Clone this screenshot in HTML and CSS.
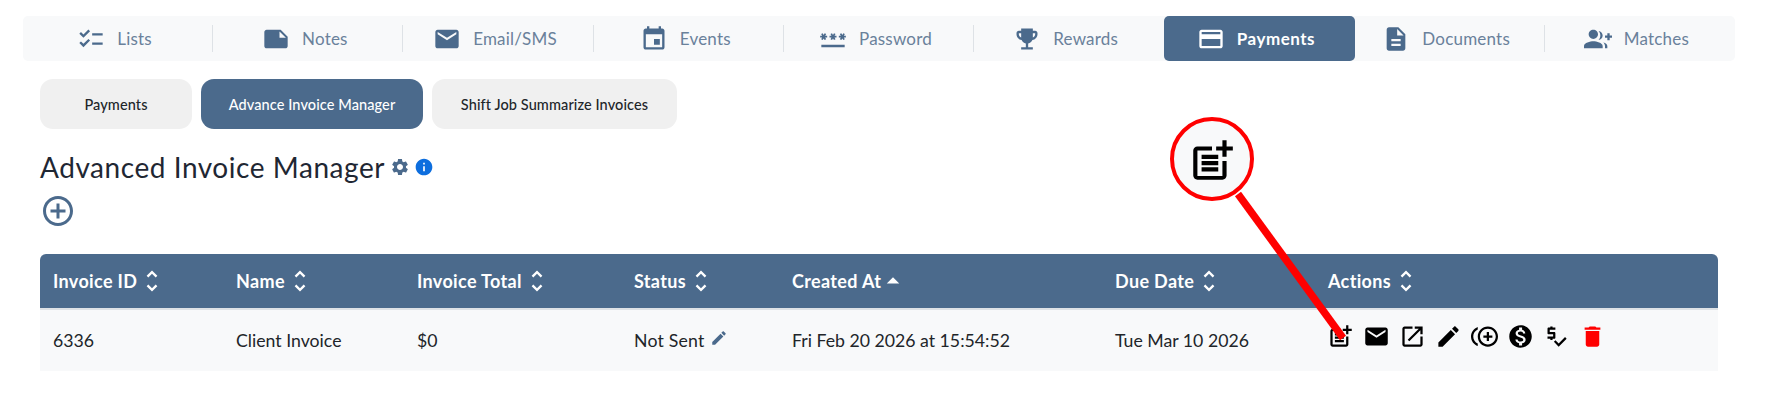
FILE: index.html
```html
<!DOCTYPE html>
<html lang="en">
<head>
  <meta charset="UTF-8" />
  <title>Advanced Invoice Manager</title>
  <link rel="stylesheet" href="styles.css">
</head>
<body>

  <!-- Top section nav -->
  <nav class="top-nav">
    <a class="nav-item"><svg viewBox="0 0 24 24"><path d="M22 7h-9v2h9V7zm0 8h-9v2h9v-2zM5.54 11 2 7.46l1.41-1.41 2.12 2.12 4.24-4.24 1.41 1.41L5.54 11zm0 8L2 15.46l1.41-1.41 2.12 2.12 4.24-4.24 1.41 1.41L5.54 19z"/></svg>Lists</a>
    <a class="nav-item"><svg viewBox="0 0 24 24"><path d="M22 10l-6-6H4c-1.1 0-2 .9-2 2v12.01c0 1.1.9 1.99 2 1.99l16-.01c1.1 0 2-.89 2-1.99v-8zm-7-4.5l5.5 5.5H15V5.5z"/></svg>Notes</a>
    <a class="nav-item"><svg viewBox="0 0 24 24"><path d="M20 4H4c-1.1 0-1.99.9-1.99 2L2 18c0 1.1.9 2 2 2h16c1.1 0 2-.9 2-2V6c0-1.1-.9-2-2-2zm0 4l-8 5-8-5V6l8 5 8-5v2z"/></svg>Email/SMS</a>
    <a class="nav-item"><svg viewBox="0 0 24 24"><path d="M17 12h-5v5h5v-5zM16 1v2H8V1H6v2H5c-1.11 0-1.99.9-1.99 2L3 19c0 1.1.89 2 2 2h14c1.1 0 2-.9 2-2V5c0-1.1-.9-2-2-2h-1V1h-2zm3 18H5V8h14v11z"/></svg>Events</a>
    <a class="nav-item"><svg viewBox="0 0 24 24"><path d="M2 17h20v2H2v-2zm1.15-4.05L4 11.47l.85 1.48 1.3-.75-.85-1.48H7v-1.5H5.3l.85-1.47L4.85 7 4 8.47 3.15 7l-1.3.75.85 1.47H1v1.5h1.7l-.85 1.48 1.3.75zm6.7-.75 1.3.75.85-1.48.85 1.48 1.3-.75-.85-1.48H15v-1.5h-1.7l.85-1.47-1.3-.75L12 8.47 11.15 7l-1.3.75.85 1.47H9v1.5h1.7l-.85 1.48zM23 9.22h-1.7l.85-1.47-1.3-.75L20 8.47 19.15 7l-1.3.75.85 1.47H17v1.5h1.7l-.85 1.48 1.3.75.85-1.48.85 1.48 1.3-.75-.85-1.48H23v-1.5z"/></svg>Password</a>
    <a class="nav-item"><svg viewBox="0 0 24 24"><path d="M19 5h-2V3H7v2H5c-1.1 0-2 .9-2 2v1c0 2.55 1.92 4.63 4.39 4.94.63 1.5 1.98 2.63 3.61 2.96V19H7v2h10v-2h-4v-3.1c1.63-.33 2.98-1.46 3.61-2.96C19.08 12.63 21 10.55 21 8V7c0-1.1-.9-2-2-2zM5 8V7h2v3.82C5.84 10.4 5 9.3 5 8zm14 0c0 1.3-.84 2.4-2 2.82V7h2v1z"/></svg>Rewards</a>
    <a class="nav-item active"><svg viewBox="0 0 24 24"><path d="M20 4H4c-1.11 0-1.99.89-1.99 2L2 18c0 1.11.89 2 2 2h16c1.11 0 2-.89 2-2V6c0-1.11-.89-2-2-2zm0 14H4v-6h16v6zm0-10H4V6h16v2z"/></svg>Payments</a>
    <a class="nav-item"><svg viewBox="0 0 24 24"><path d="M14 2H6c-1.1 0-1.99.9-1.99 2L4 20c0 1.1.89 2 1.99 2H18c1.1 0 2-.9 2-2V8l-6-6zm2 16H8v-2h8v2zm0-4H8v-2h8v2zm-3-5V3.5L18.5 9H13z"/></svg>Documents</a>
    <a class="nav-item"><svg viewBox="0 0 24 24"><path d="M22 9V7h-2v2h-2v2h2v2h2v-2h2V9zM8 12c2.21 0 4-1.79 4-4s-1.79-4-4-4-4 1.79-4 4 1.79 4 4 4zm0 2c-2.67 0-8 1.34-8 4v2h16v-2c0-2.66-5.33-4-8-4zm4.51-8.95C13.43 6.11 14 7.51 14 9s-.57 2.89-1.49 3.95C14.47 12.7 16 11.06 16 9s-1.53-3.7-3.49-3.95zm4.02 9.78c.75.81 1.47 1.93 1.47 3.17v2h2v-2c0-1.45-1.59-2.52-3.47-3.17z"/></svg>Matches</a>
  </nav>

  <main class="content">
    <div class="sub-tabs">
      <a class="sub-tab tab-payments">Payments</a>
      <a class="sub-tab tab-manager active">Advance Invoice Manager</a>
      <a class="sub-tab tab-shift">Shift Job Summarize Invoices</a>
    </div>

    <div class="title-row">
      <h1>Advanced Invoice Manager</h1>
      <svg class="gear" viewBox="0 0 24 24"><path d="M19.14 12.94c.04-.3.06-.61.06-.94 0-.32-.02-.64-.07-.94l2.03-1.58c.18-.14.23-.41.12-.61l-1.92-3.32c-.12-.22-.37-.29-.59-.22l-2.39.96c-.5-.38-1.03-.7-1.62-.94l-.36-2.54c-.04-.24-.24-.41-.48-.41h-3.84c-.24 0-.43.17-.47.41l-.36 2.54c-.59.24-1.13.57-1.62.94l-2.39-.96c-.22-.08-.47 0-.59.22L2.74 8.87c-.12.21-.08.47.12.61l2.03 1.58c-.05.3-.09.63-.09.94s.02.64.07.94l-2.03 1.58c-.18.14-.23.41-.12.61l1.92 3.32c.12.22.37.29.59.22l2.39-.96c.5.38 1.03.7 1.62.94l.36 2.54c.05.24.24.41.48.41h3.84c.24 0 .44-.17.47-.41l.36-2.54c.59-.24 1.13-.56 1.62-.94l2.39.96c.22.08.47 0 .59-.22l1.92-3.32c.12-.22.07-.47-.12-.61l-2.01-1.58zM12 15.6c-1.98 0-3.6-1.62-3.6-3.6s1.62-3.6 3.6-3.6 3.6 1.62 3.6 3.6-1.62 3.6-3.6 3.6z"/></svg>
      <svg class="info" viewBox="0 0 24 24"><path d="M12 2C6.48 2 2 6.48 2 12s4.48 10 10 10 10-4.48 10-10S17.52 2 12 2zm1 15h-2v-6h2v6zm0-8h-2V7h2v2z"/></svg>
    </div>

    <svg class="add-btn" viewBox="0 0 24 24"><path d="M13 7h-2v4H7v2h4v4h2v-4h4v-2h-4V7zm-1-5C6.48 2 2 6.48 2 12s4.48 10 10 10 10-4.48 10-10S17.52 2 12 2zm0 18c-4.41 0-8-3.59-8-8s3.59-8 8-8 8 3.59 8 8-3.59 8-8 8z"/></svg>

    <table class="invoices">
      <colgroup>
        <col class="col-id"><col class="col-name"><col class="col-total"><col class="col-status"><col class="col-created"><col class="col-due"><col class="col-actions">
      </colgroup>
      <thead>
        <tr>
          <th><span class="th-inner">Invoice ID<svg class="sort" viewBox="0 0 24 24"><path d="M12 5.83L15.17 9l1.41-1.41L12 3 7.41 7.59 8.83 9 12 5.83zm0 12.34L8.83 15l-1.41 1.41L12 21l4.59-4.59L15.17 15 12 18.17z"/></svg></span></th>
          <th><span class="th-inner">Name<svg class="sort" viewBox="0 0 24 24"><path d="M12 5.83L15.17 9l1.41-1.41L12 3 7.41 7.59 8.83 9 12 5.83zm0 12.34L8.83 15l-1.41 1.41L12 21l4.59-4.59L15.17 15 12 18.17z"/></svg></span></th>
          <th><span class="th-inner">Invoice Total<svg class="sort" viewBox="0 0 24 24"><path d="M12 5.83L15.17 9l1.41-1.41L12 3 7.41 7.59 8.83 9 12 5.83zm0 12.34L8.83 15l-1.41 1.41L12 21l4.59-4.59L15.17 15 12 18.17z"/></svg></span></th>
          <th><span class="th-inner">Status<svg class="sort" viewBox="0 0 24 24"><path d="M12 5.83L15.17 9l1.41-1.41L12 3 7.41 7.59 8.83 9 12 5.83zm0 12.34L8.83 15l-1.41 1.41L12 21l4.59-4.59L15.17 15 12 18.17z"/></svg></span></th>
          <th><span class="th-inner">Created At<svg class="sort sorted" viewBox="0 0 24 24"><path d="M7 14l5-5 5 5z"/></svg></span></th>
          <th><span class="th-inner">Due Date<svg class="sort" viewBox="0 0 24 24"><path d="M12 5.83L15.17 9l1.41-1.41L12 3 7.41 7.59 8.83 9 12 5.83zm0 12.34L8.83 15l-1.41 1.41L12 21l4.59-4.59L15.17 15 12 18.17z"/></svg></span></th>
          <th><span class="th-inner">Actions<svg class="sort" viewBox="0 0 24 24"><path d="M12 5.83L15.17 9l1.41-1.41L12 3 7.41 7.59 8.83 9 12 5.83zm0 12.34L8.83 15l-1.41 1.41L12 21l4.59-4.59L15.17 15 12 18.17z"/></svg></span></th>
        </tr>
      </thead>
      <tbody>
        <tr>
          <td>6336</td>
          <td>Client Invoice</td>
          <td>$0</td>
          <td><span class="status">Not Sent<svg class="status-edit" viewBox="0 0 24 24"><path d="M3 17.25V21h3.75L17.81 9.94l-3.75-3.75L3 17.25zM20.71 7.04c.39-.39.39-1.02 0-1.41l-2.34-2.34c-.39-.39-1.02-.39-1.41 0l-1.83 1.83 3.75 3.75 1.83-1.83z"/></svg></span></td>
          <td>Fri Feb 20 2026 at 15:54:52</td>
          <td>Tue Mar 10 2026</td>
          <td>
            <div class="actions">
              <svg viewBox="0 0 24 24"><path d="M17 19.22H5V7h7V5H5c-1.1 0-2 .9-2 2v12c0 1.1.9 2 2 2h12c1.1 0 2-.9 2-2v-7h-2v7.22zM19 2h-2v3h-3c.01.01 0 2 0 2h3v2.99c.01.01 2 0 2 0V7h3V5h-3V2zM7 9h8v2H7zM7 12v2h8v-2h-3zM7 15h8v2H7z"/></svg>
              <svg viewBox="0 0 24 24"><path d="M20 4H4c-1.1 0-1.99.9-1.99 2L2 18c0 1.1.9 2 2 2h16c1.1 0 2-.9 2-2V6c0-1.1-.9-2-2-2zm0 4l-8 5-8-5V6l8 5 8-5v2z"/></svg>
              <svg viewBox="0 0 24 24"><path d="M19 19H5V5h7V3H5c-1.11 0-2 .9-2 2v14c0 1.1.89 2 2 2h14c1.1 0 2-.9 2-2v-7h-2v7zM14 3v2h3.59l-9.83 9.83 1.41 1.41L19 6.41V10h2V3h-7z"/></svg>
              <svg viewBox="0 0 24 24"><path d="M3 17.25V21h3.75L17.81 9.94l-3.75-3.75L3 17.25zM20.71 7.04c.39-.39.39-1.02 0-1.41l-2.34-2.34c-.39-.39-1.02-.39-1.41 0l-1.83 1.83 3.75 3.75 1.83-1.83z"/></svg>
              <svg viewBox="0 0 24 24"><path d="M16 8h-2v3h-3v2h3v3h2v-3h3v-2h-3zM2 12c0-2.79 1.64-5.2 4.01-6.32V3.52C2.52 4.76 0 8.09 0 12s2.52 7.24 6.01 8.48v-2.16C3.64 17.2 2 14.79 2 12zm13-9c-4.96 0-9 4.04-9 9s4.04 9 9 9 9-4.04 9-9-4.04-9-9-9zm0 16c-3.86 0-7-3.14-7-7s3.14-7 7-7 7 3.14 7 7-3.14 7-7 7z"/></svg>
              <svg viewBox="0 0 24 24"><path d="M12 2C6.48 2 2 6.48 2 12s4.48 10 10 10 10-4.48 10-10S17.52 2 12 2zm1.41 16.09V20h-2.67v-1.93c-1.71-.36-3.16-1.46-3.27-3.4h1.96c.1 1.05.82 1.87 2.65 1.87 1.96 0 2.4-.98 2.4-1.59 0-.83-.44-1.61-2.67-2.14-2.48-.6-4.18-1.62-4.18-3.67 0-1.72 1.39-2.84 3.11-3.21V4h2.67v1.95c1.86.45 2.79 1.86 2.85 3.39H14.3c-.05-1.11-.64-1.87-2.22-1.87-1.5 0-2.4.68-2.4 1.64 0 .84.65 1.39 2.67 1.91s4.18 1.39 4.18 3.91c-.01 1.83-1.38 2.83-3.12 3.16z"/></svg>
              <svg viewBox="0 0 24 24"><path d="M11 13V9c0-.55-.45-1-1-1H6V6h5V4H8.5V3h-2v1H5c-.55 0-1 .45-1 1v4c0 .55.45 1 1 1h4v2H4v2h2.5v1h2v-1H10c.55 0 1-.45 1-1zm8.59-.48-5.66 5.66-2.83-2.83-1.41 1.41 4.24 4.25 7.07-7.07z"/></svg>
              <svg class="trash" viewBox="0 0 24 24"><path d="M6 19c0 1.1.9 2 2 2h8c1.1 0 2-.9 2-2V7H6v12zM19 4h-3.5l-1-1h-5l-1 1H5v2h14V4z"/></svg>
            </div>
          </td>
        </tr>
      </tbody>
    </table>
  </main>

  <!-- Red callout drawn over the page -->
  <svg class="callout-line" viewBox="0 0 1776 405"><line x1="1238" y1="194" x2="1343" y2="338"/></svg>
  <div class="callout">
    <svg viewBox="0 0 24 24"><path d="M17 19.22H5V7h7V5H5c-1.1 0-2 .9-2 2v12c0 1.1.9 2 2 2h12c1.1 0 2-.9 2-2v-7h-2v7.22zM19 2h-2v3h-3c.01.01 0 2 0 2h3v2.99c.01.01 2 0 2 0V7h3V5h-3V2zM7 9h8v2H7zM7 12v2h8v-2h-3zM7 15h8v2H7z"/></svg>
  </div>

</body>
</html>
```

FILE: styles.css
```css
* {
  box-sizing: border-box;
}
body {
  margin: 0;
  padding: 16px 41px 0 23px;
  position: relative;
  height: 405px;
  overflow: hidden;
  background-color: #fff;
  color: #212529;
  font-family: 'Lato', sans-serif;
}
svg {
  fill: currentColor;
  flex: none;
}

/* top nav */
.top-nav {
  display: flex;
  height: 45px;
  background-color: #f8f9fa;
  border-radius: 5px;
}
.nav-item {
  flex: 1;
  display: flex;
  align-items: center;
  justify-content: center;
  gap: 12px;
  padding-right: 7px;
  position: relative;
  color: #6a819b;
  font-size: 17px;
  letter-spacing: 0.2px;
}
.nav-item svg {
  width: 28px;
  height: 28px;
  color: #4b6a8c;
}
.nav-item::after {
  content: "";
  position: absolute;
  right: 0;
  top: 9px;
  bottom: 9px;
  width: 1px;
  background-color: #dee2e6;
}
.nav-item:nth-child(6)::after,
.nav-item.active::after,
.nav-item:last-child::after {
  display: none;
}
.nav-item.active {
  background-color: #4b6a8c;
  border-radius: 5px;
  color: #fff;
  font-weight: 700;
  letter-spacing: 0.5px;
}
.nav-item.active svg {
  color: #fff;
}

.content {
  padding-left: 17px;
}

/* sub tabs */
.sub-tabs {
  display: flex;
  gap: 9px;
  margin-top: 18px;
}
.sub-tab {
  display: flex;
  align-items: center;
  justify-content: center;
  height: 50px;
  background-color: #f0f0f0;
  border-radius: 13px;
  color: #212529;
  font-size: 14.5px;
  font-weight: 500;
  letter-spacing: 0.1px;
}
.sub-tab.active {
  background-color: #4b6a8c;
  color: #fff;
}
.tab-payments {
  width: 152px;
}
.tab-manager {
  width: 222px;
}
.tab-shift {
  width: 245px;
}

/* title */
.title-row {
  display: flex;
  align-items: center;
  margin-top: 20px;
  height: 36px;
}
h1 {
  margin: 0;
  font-size: 28px;
  font-weight: 400;
  color: #1f2733;
  letter-spacing: 0.55px;
}
.gear {
  width: 20px;
  height: 20px;
  margin-left: 5px;
  color: #4b6a8c;
}
.info {
  width: 20px;
  height: 20px;
  margin-left: 4px;
  color: #0d6ede;
}
.add-btn {
  display: block;
  width: 36px;
  height: 36px;
  margin: 8px 0 0 0;
  color: #4b6a8c;
}

/* table */
.invoices {
  width: 1678px;
  margin-top: 25px;
  border-collapse: separate;
  border-spacing: 0;
  table-layout: fixed;
  font-size: 17.7px;
}
.col-id { width: 183px; }
.col-name { width: 181px; }
.col-total { width: 217px; }
.col-status { width: 158px; }
.col-created { width: 323px; }
.col-due { width: 213px; }
.invoices th {
  height: 56px;
  padding: 0 13px;
  background-color: #4b6a8c;
  border-bottom: 2px solid #dee2e6;
  color: #fff;
  font-size: 18px;
  font-weight: 700;
  letter-spacing: 0.35px;
  text-align: left;
}
.invoices th:first-child {
  border-top-left-radius: 6px;
}
.invoices th:last-child {
  border-top-right-radius: 6px;
}
.th-inner {
  display: flex;
  align-items: center;
  gap: 1px;
}
.sort {
  width: 28px;
  height: 28px;
}
.sorted {
  width: 30px;
  height: 30px;
  margin-left: -4px;
}
.invoices td {
  height: 61px;
  padding: 0 13px;
  background-color: #f8f9fa;
}
.status {
  display: inline-flex;
  align-items: center;
  gap: 5px;
  letter-spacing: 0.2px;
}
.status-edit {
  width: 18px;
  height: 18px;
  margin-bottom: 5px;
  color: #4b6a8c;
}
.actions {
  display: flex;
  gap: 9px;
  margin-bottom: 9px;
  margin-left: -1px;
  color: #000;
}
.actions svg {
  width: 27px;
  height: 27px;
}
.actions .trash {
  color: #f00;
}

/* callout */
.callout {
  position: absolute;
  left: 1170px;
  top: 117px;
  width: 84px;
  height: 84px;
  padding-top: 3px;
  display: flex;
  align-items: center;
  justify-content: center;
  background-color: #f8f9fa;
  border: 4px solid #f00;
  border-radius: 50%;
  color: #000;
}
.callout svg {
  width: 50px;
  height: 50px;
}
.callout-line {
  position: absolute;
  left: 0;
  top: 0;
  width: 1776px;
  height: 405px;
}
.callout-line line {
  stroke: #f00;
  stroke-width: 7.5;
}
```
